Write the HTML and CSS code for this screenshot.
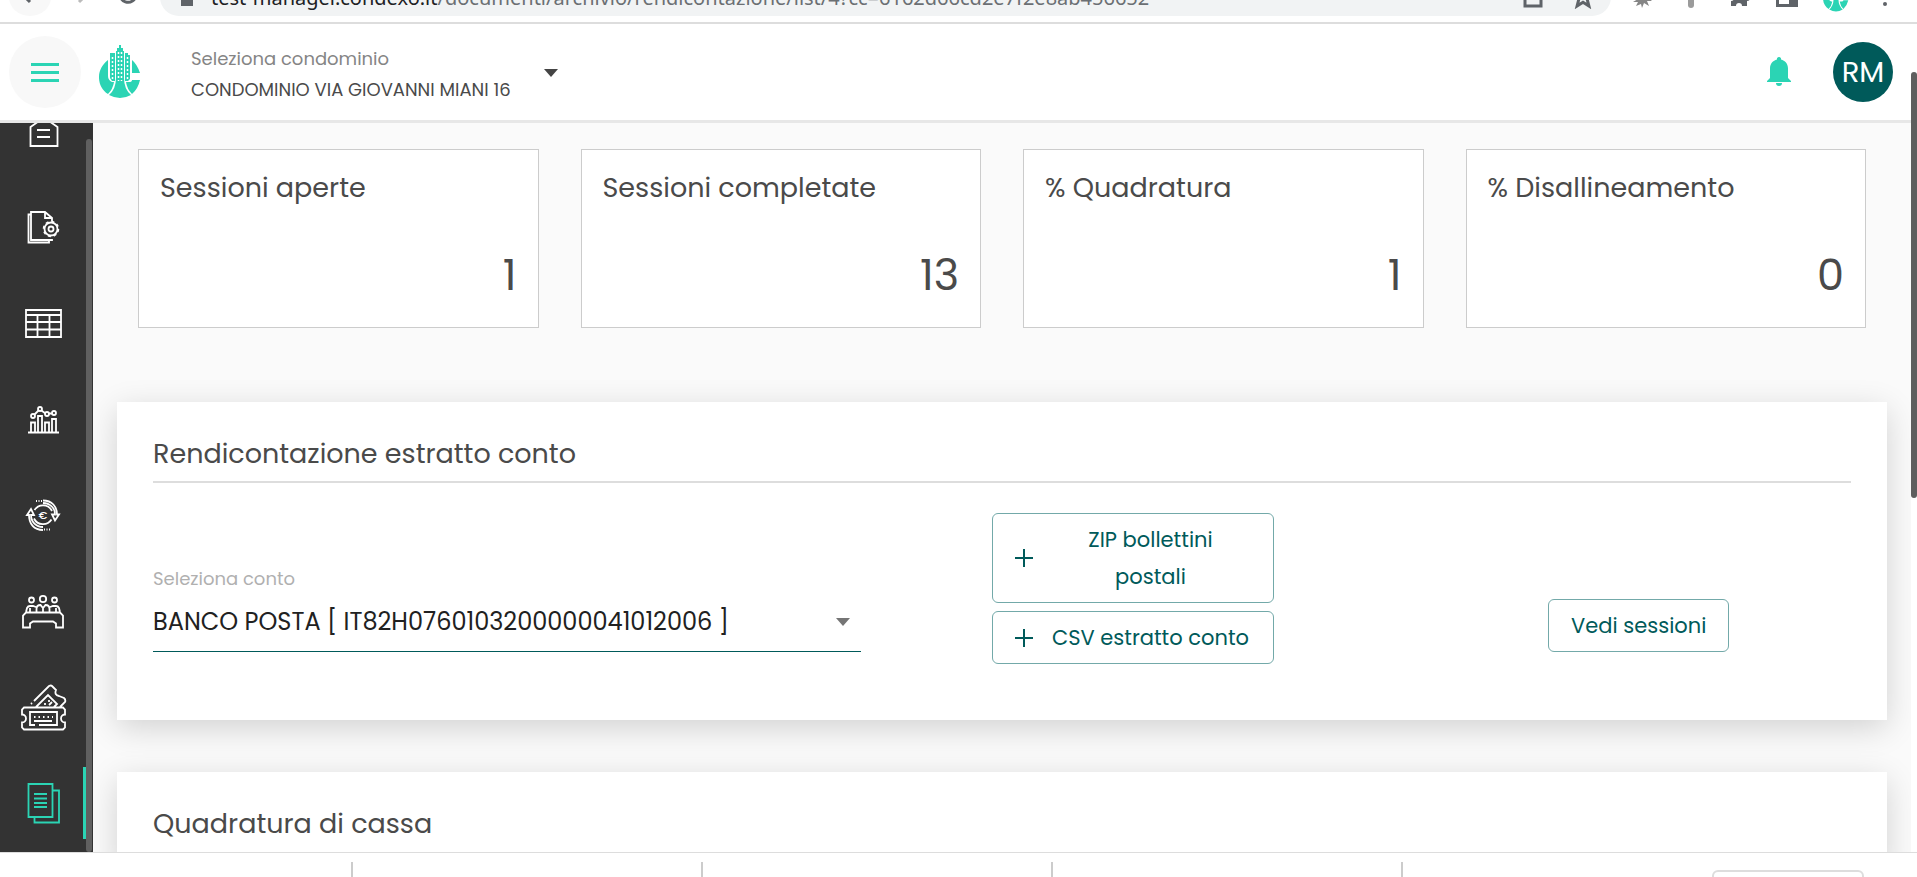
FILE: index.html
```
<!DOCTYPE html>
<html lang="it">
<head>
    <meta charset="UTF-8">
    <meta name="viewport" content="width=device-width, initial-scale=1.0">
    <title>Rendicontazione</title>
    <link rel="stylesheet" href="styles.css">
</head>
<body>
    <div class="browser-bar">
        <button class="nav-btn back" aria-label="Indietro"><svg width="24" height="24" viewBox="0 0 24 24"><path d="M20 12H5M12 4l-8 8 8 8"/></svg></button>
        <button class="nav-btn" aria-label="Avanti"><svg class="dim" width="24" height="24" viewBox="0 0 24 24"><path d="M4 12h15M12 4l8 8-8 8"/></svg></button>
        <button class="nav-btn" aria-label="Ricarica"><svg width="24" height="24" viewBox="0 0 24 24"><path d="M18 7a8 8 0 1 0 2 6M20 3v6h-6"/></svg></button>
        <div class="address">
            <svg width="14" height="20" viewBox="0 0 14 20"><path d="M1 8h12v11H1z" fill="#5f6368"/><path d="M4 8V4h6v4" fill="none" stroke="#5f6368" stroke-width="2"/></svg>
            <span class="url"><b>test-manager.condexo.it</b>/documenti/archivio/rendicontazione/list/4?cc=6162d66cd2e7f2e8ab456652</span>
            <svg class="line" width="20" height="24" viewBox="0 0 20 24"><path d="M5 8H2v13h16V15M7 15c0-6 4-8 10-8M13 3l4 4-4 4"/></svg>
            <svg width="24" height="24" viewBox="0 0 24 24"><path d="M12 3l2.600 6.400 6.800.500-5.200 4.400 1.700 6.700-5.900-3.700L6.100 21l1.700-6.700-5.200-4.400 6.800-.500z" fill="none" stroke="#5f6368" stroke-width="3"/></svg>
        </div>
        <div class="extensions">
            <svg width="24" height="24" viewBox="0 0 24 24"><path d="M12 12L2 18l5 0-2 4 5-2 1 4 2-5 5 3-2-5 5 0-5-4z" fill="#858585"/></svg>
            <svg width="24" height="24" viewBox="0 0 24 24"><rect x="9" y="2" width="6" height="22" rx="3" fill="#9b9b9b"/></svg>
            <svg width="24" height="24" viewBox="0 0 24 24"><path d="M4 6h5a3 3 0 0 1 6 0h5v5a3 3 0 0 1 0 6v5h-5a3 3 0 0 0-6 0H4v-5a3 3 0 0 0 0-6z" fill="#5f6368"/></svg>
            <svg width="24" height="24" viewBox="0 0 24 24"><path d="M1 3h22v20H1zM4 6v14h10V6z" fill="#5f6368" fill-rule="evenodd"/></svg>
            <svg width="26" height="32" viewBox="0 2 42 52"><use href="#logo-base"/></svg>
            <svg width="24" height="24" viewBox="0 0 24 24"><g fill="#5f6368"><circle cx="12" cy="6" r="2"/><circle cx="12" cy="13" r="2"/><circle cx="12" cy="20" r="2"/></g></svg>
        </div>
    </div>

    <header class="topbar">
        <button class="menu-btn" aria-label="Menu"><span></span><span></span><span></span></button>
        <svg class="logo" width="42" height="54" viewBox="0 0 42 54">
            <g id="logo-base" fill="#2bd4b4">
                <path d="M9 15C-4 25-2 42 9 49q5-5 6-12h-2q-4-2-4-6z"/>
                <path d="M33 15q5 4 8 13h-8zM33 35h8q-2 9-8 14-5-5-6-12h3q3 0 3-2z"/>
                <path d="M17 33h8q0 11 7 17-11 6-22 0 7-6 7-17z"/>
            </g>
            <path d="M20 0h2v3h2v3h1v30h-8V6h1V3h2zM11 8h5v28h-3l-2-3zM26 8h3v2h2v24l-2 2h-3z" fill="#2bd4b4"/>
            <path d="M19.500 7v29M22.500 7v29M13.500 12v23M28.500 12v23" fill="none" stroke="#fff" stroke-width="1.500" stroke-dasharray="2 2"/>
        </svg>
        <div class="condo">
            <label for="condominio">Seleziona condominio</label>
            <select id="condominio"><option>CONDOMINIO VIA GIOVANNI MIANI 16</option></select>
            <svg class="caret" width="14" height="8" viewBox="0 0 14 8"><path d="M0 0h14L7 8z"/></svg>
        </div>
        <button class="bell" aria-label="Notifiche"><svg width="24" height="30" viewBox="0 0 24 30"><path d="M12 0a2 2 0 0 1 2 2.500c4 1 7 4 7 9V21l3 3v1H0v-1l3-3v-9.500c0-5 3-8 7-9A2 2 0 0 1 12 0zM9 26h6a3 3 0 0 1-6 0z"/></svg></button>
        <button class="avatar">RM</button>
    </header>

    <div class="main">
        <nav class="sidebar">
            <a href="#" aria-label="Anagrafica"><svg viewBox="0 0 48 48"><path d="M11.500 39V20l10-7h7l10 7v19zM18 23h13M18 30h13"/></svg></a>
            <a href="#" aria-label="Impostazioni documenti"><svg viewBox="0 0 48 48"><path d="M33 36v1H12V9h14l7 6v3M26 9v6h7M12 11.500H9.500v28H30V37"/><circle cx="32" cy="26" r="6.500"/><circle cx="32" cy="26" r="2.500"/><circle cx="32" cy="26" r="7.500" stroke-width="1.500" stroke-dasharray="3 2.900"/></svg></a>
            <a href="#" aria-label="Tabelle"><svg viewBox="0 0 48 48"><path d="M7 11h35v27H7zM7 16h35M7 23h35M7 30.500h35M18.500 16v22M30.500 16v22"/></svg></a>
            <a href="#" aria-label="Statistiche"><svg viewBox="0 0 48 48"><path d="M9 37.500h31M12 37V27.500h4V37M19 37V21h4v16M26 37V27.500h4V37M33 37V24h4v13M15.500 19.500l4-4M22.500 15.500l4 3M30 18.500h3"/><circle cx="14" cy="21" r="2"/><circle cx="21" cy="14" r="2"/><circle cx="28" cy="19" r="2"/><circle cx="35" cy="18" r="2"/></svg></a>
            <a href="#" aria-label="Movimenti"><svg viewBox="0 0 48 48"><path d="M24 9.500c9 0 14 6 14 14h2l-4 6-3-6h3c0-7-5-11-12-11.500M15.500 19a10 10 0 0 1 17.500 1M24 39C15 39 10 33 10 24H8l4-6 3 6h-3c0 7 5 12 12 12M32.500 28.500a10 10 0 0 1-17.500-1"/><path d="M17 10h6M25 38.500h6" stroke-dasharray="1 1.500"/><text x="24" y="28">€</text></svg></a>
            <a href="#" aria-label="Assemblee"><svg viewBox="0 0 48 48"><circle cx="24" cy="12" r="3.200"/><circle cx="12.500" cy="13" r="2.500"/><circle cx="35.500" cy="13" r="2.500"/><path d="M17.500 25v-3q0-4 4-4l2.500 3 2.500-3q4 0 4 4v3M7 25l1-4q1-2 3-2h3l3 1M41 25l-1-4q-1-2-3-2h-3l-3 1M11 21v4M37 21v4M24 21v4M7 25.500h34l3 3v12h-7v-4l-3-2H14l-3 2v4H4v-12z"/></svg></a>
            <a href="#" aria-label="Ticket"><svg viewBox="0 0 48 48"><path d="M5 24.500h39l2 2v5a4 4 0 0 0 0 8v5l-2 2H5l-2-2v-5a4 4 0 0 0 0-8v-5zM16 42h-5V29h27v13H20M15 38h18M15 18L30 3q2-1 3 0l4 4q-2 5 3 6l5 2q2 2 1 4l-5 5M17 24l12-12 9 9-3 3M13 20l-1 1"/><path d="M15 34h19" stroke-dasharray="1.500 3"/><path d="M26 20v2M30 17v2M30 22l3-3"/></svg></a>
            <a href="#" class="active" aria-label="Documenti"><svg viewBox="0 0 48 48"><path d="M9.500 5h24v33h-24zM33.500 11.500H40v32H15.500V38M15 15h13M15 19.500h13M15 24h13M15 28h13"/></svg></a>
        </nav>

        <main class="content">
            <section class="stats">
                <article><h3>Sessioni aperte</h3><p>1</p></article>
                <article><h3>Sessioni completate</h3><p>13</p></article>
                <article><h3>% Quadratura</h3><p>1</p></article>
                <article><h3>% Disallineamento</h3><p>0</p></article>
            </section>

            <section class="panel">
                <h2>Rendicontazione estratto conto</h2>
                <div class="row">
                    <div class="field">
                        <label for="conto">Seleziona conto</label>
                        <select id="conto"><option>BANCO POSTA [ IT82H0760103200000041012006 ]</option></select>
                        <svg class="caret" width="14" height="8" viewBox="0 0 14 8"><path d="M0 0h14L7 8z"/></svg>
                    </div>
                    <div class="uploads">
                        <button class="btn"><svg width="18" height="18" viewBox="0 0 18 18"><path d="M9 0v18M0 9h18"/></svg><span>ZIP bollettini<br>postali</span></button>
                        <button class="btn"><svg width="18" height="18" viewBox="0 0 18 18"><path d="M9 0v18M0 9h18"/></svg><span>CSV estratto conto</span></button>
                    </div>
                    <button class="btn sessions">Vedi sessioni</button>
                </div>
            </section>

            <section class="panel">
                <h2>Quadratura di cassa</h2>
            </section>
        </main>
        <div class="scrollbar"></div>
    </div>

    <footer class="bottom-bar">
        <div></div><div></div><div></div><div></div>
        <div><button aria-label="Apri"></button></div>
    </footer>
</body>
</html>
```
FILE: styles.css
```
* {
    box-sizing: border-box;
}
body {
    margin: 0;
    height: 100vh;
    overflow: hidden;
    display: flex;
    flex-direction: column;
    font-family: Poppins, Inter, sans-serif;
    font-weight: 400;
    color: #4a4a4a;
    background-color: #fff;
}
h2, h3, p {
    margin: 0;
    font-weight: 400;
}
button, select {
    font: inherit;
    color: inherit;
    background: none;
    border: none;
    padding: 0;
    cursor: pointer;
}
select {
    appearance: none;
    width: 100%;
}

/* browser bar, scrolled half out of view */
.browser-bar {
    height: 24px;
    flex-shrink: 0;
    display: flex;
    align-items: flex-end;
    padding: 0 20px 6px 9px;
    border-bottom: 2px solid #ddd;
    overflow: hidden;
}
.nav-btn {
    width: 42px;
    height: 38px;
    margin-right: 7px;
    flex-shrink: 0;
    border-radius: 50%;
}
.back {
    background-color: #f8f8f8;
}
.nav-btn svg, .line {
    fill: none;
    stroke: #5f6368;
    stroke-width: 3;
}
.nav-btn .dim {
    stroke: #bbb;
}
.address {
    flex: 1;
    height: 38px;
    display: flex;
    align-items: center;
    gap: 28px;
    margin-left: 4px;
    padding: 0 16px 0 20px;
    border-radius: 20px;
    background-color: #f1f3f4;
}
.url {
    flex: 1;
    margin-left: -11px;
    font-family: "Noto Sans", sans-serif;
    font-size: 20px;
    color: #6b6f73;
    white-space: nowrap;
}
.url b {
    font-weight: 400;
    color: #202124;
}
.extensions {
    height: 40px;
    display: flex;
    align-items: center;
    gap: 24px;
    margin-left: 20px;
}

.topbar {
    height: 99px;
    flex-shrink: 0;
    display: flex;
    align-items: center;
    padding: 0 24px 0 9px;
    border-bottom: 3px solid #e7e7e7;
}
.menu-btn {
    width: 72px;
    height: 72px;
    display: flex;
    flex-direction: column;
    align-items: center;
    justify-content: center;
    gap: 5px;
    border-radius: 50%;
    background-color: #f8f8f8;
}
.menu-btn span {
    width: 28px;
    height: 3px;
    background-color: #2bd4b4;
}
.logo {
    margin: 0 50px 0 18px;
}
.condo {
    position: relative;
    width: 367px;
    padding-top: 4px;
    font-size: 18px;
    line-height: 31px;
}
.condo label {
    display: block;
    color: #858585;
}
.condo select {
    display: block;
    height: 31px;
}
.caret {
    position: absolute;
    right: 0;
    top: 30px;
    fill: #444;
    pointer-events: none;
}
.bell {
    height: 30px;
    margin-left: auto;
    fill: #2bd4b4;
}
.avatar {
    width: 60px;
    height: 60px;
    margin-left: 42px;
    border-radius: 50%;
    background-color: #005a5a;
    color: #fff;
    font-size: 29px;
}

.main {
    flex: 1;
    min-height: 0;
    display: flex;
}
.sidebar {
    width: 93px;
    flex-shrink: 0;
    overflow: hidden;
    position: relative;
    background-color: #333;
}
.sidebar::after {
    content: "";
    position: absolute;
    right: 1px;
    top: 16px;
    bottom: 0;
    width: 6px;
    border-radius: 3px;
    background-color: #606060;
}
.sidebar a {
    display: block;
    width: 86px;
    height: 72px;
    margin-bottom: 24px;
    padding: 12px 19px;
    color: #fff;
}
.sidebar a:first-child {
    margin-top: -28px;
}
.sidebar .active {
    color: #2bd4b4;
    border-right: 3px solid #2bd4b4;
    padding-right: 16px;
}
.sidebar svg {
    display: block;
    width: 48px;
    height: 48px;
    fill: none;
    stroke: currentColor;
    stroke-width: 1.8;
}
.sidebar text {
    font-size: 11px;
    font-weight: 500;
    text-anchor: middle;
    fill: currentColor;
    stroke: none;
}

.content {
    flex: 1;
    min-width: 0;
    overflow: hidden;
    padding: 26px 24px 0;
    background-color: #fafafa;
}
.stats {
    display: grid;
    grid-template-columns: repeat(4, 1fr);
    gap: 42px;
    margin: 0 21px 74px;
}
.stats article {
    padding: 21px 21px 20px;
    border: 1px solid #ccc;
    background-color: #fff;
}
.stats h3 {
    font-size: 27px;
    line-height: 34px;
}
.stats p {
    margin-top: 38px;
    font-size: 43px;
    line-height: 64px;
    text-align: right;
}
.panel {
    margin-bottom: 52px;
    padding: 36px 36px 20px;
    background-color: #fff;
    box-shadow: 0 8px 30px rgba(0, 0, 0, 0.16);
}
.panel h2 {
    padding-bottom: 11px;
    border-bottom: 2px solid #ddd;
    font-size: 27px;
    line-height: 32px;
}
.panel:last-child h2 {
    border-bottom: none;
}
.row {
    display: grid;
    grid-template-columns: 5fr 4fr 3fr;
    align-items: end;
    padding: 30px 0 36px;
}
.field {
    position: relative;
    margin-bottom: 12px;
    border-bottom: 1px solid #005a5a;
}
.field label {
    display: block;
    font-size: 18px;
    line-height: 24px;
    color: #b0b0b0;
}
.field select {
    display: block;
    height: 60px;
    font-size: 24px;
    color: #212121;
}
.field .caret {
    right: 11px;
    top: 51px;
    fill: #757575;
}
.uploads {
    width: 282px;
    margin-left: 131px;
    display: grid;
    gap: 8px;
}
.btn {
    display: flex;
    align-items: center;
    padding: 7px 22px;
    border: 1px solid #73a9a9;
    border-radius: 6px;
    font-size: 21px;
    line-height: 37px;
    color: #005a5a;
}
.btn svg {
    stroke: currentColor;
    stroke-width: 2;
}
.btn span {
    flex: 1;
    padding-left: 18px;
    white-space: nowrap;
}
.sessions {
    justify-self: center;
    margin-bottom: 12px;
}
.scrollbar {
    width: 6px;
    margin-top: -51px;
    margin-bottom: 354px;
    border-radius: 3px;
    background-color: #5e5e5e;
}

.bottom-bar {
    height: 25px;
    flex-shrink: 0;
    display: flex;
    padding: 9px 53px 0 3px;
    border-top: 1px solid #ddd;
    background-color: #fff;
    overflow: hidden;
}
.bottom-bar div {
    flex: 0 0 350px;
    border-right: 2px solid #ccc;
}
.bottom-bar div:last-child {
    flex: 1;
    border: none;
}
.bottom-bar button {
    display: block;
    width: 152px;
    height: 40px;
    margin: 8px 0 0 auto;
    border: 2px solid #ddd;
    border-radius: 6px;
}
```
